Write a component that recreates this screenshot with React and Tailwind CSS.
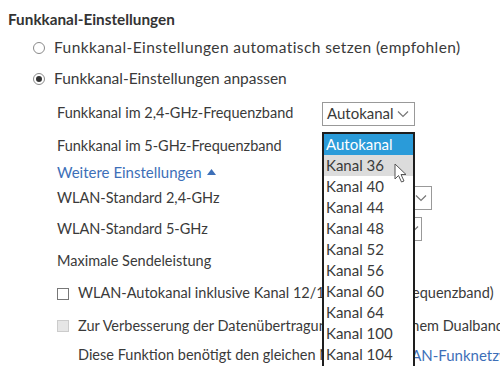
import React from 'react';

const channels = ['Kanal 36', 'Kanal 40', 'Kanal 44', 'Kanal 48', 'Kanal 52', 'Kanal 56', 'Kanal 60', 'Kanal 64', 'Kanal 100', 'Kanal 104', 'Kanal 108'];

function Chevron() {
  return (
    <svg width="12" height="8" viewBox="0 0 12 8" className="shrink-0">
      <path d="M1 1.5 L6 6.5 L11 1.5" fill="none" stroke="#777" strokeWidth="1.2" />
    </svg>
  );
}

function Radio({ checked }) {
  return (
    <span className="w-[12px] h-[12px] rounded-full border border-[#8a8a8a] bg-white flex items-center justify-center shrink-0">
      {checked && <span className="w-[6px] h-[6px] rounded-full bg-[#333]" />}
    </span>
  );
}

function Cursor() {
  return (
    <svg width="14" height="21" viewBox="0 0 14 21" className="absolute left-[394px] top-[163px]">
      <path d="M1 1 L1 16 L4.5 12.5 L7.5 19 L10 18 L7 11.5 L12 11.5 Z" fill="#fff" stroke="#555" strokeWidth="1" strokeLinejoin="round" />
    </svg>
  );
}

function Row({ label, children, h }) {
  return (
    <div className={`flex items-center pl-[57px] ${h}`}>
      <span className="w-[265px] shrink-0">{label}</span>
      {children}
    </div>
  );
}

export default function App() {
  return (
    <div className="relative w-[500px] h-[366px] overflow-hidden bg-white text-[14.5px] text-[#3a3a3a] font-['Lato','Noto_Sans',sans-serif] leading-none">
      <div className="flex flex-col pt-[11px]">
        <h2 className="pl-[8px] h-[18px] flex items-center font-bold text-[15.3px] text-[#333]">Funkkanal-Einstellungen</h2>
        <div className="flex items-center gap-[9px] pl-[33px] h-[31px] mt-[3px] text-[15.5px]">
          <Radio />
          <span className="tracking-[0.4px]">Funkkanal-Einstellungen automatisch setzen (empfohlen)</span>
        </div>
        <div className="flex items-center gap-[9px] pl-[33px] h-[32px] text-[15.5px]">
          <Radio checked />
          <span>Funkkanal-Einstellungen anpassen</span>
        </div>
        <Row label="Funkkanal im 2,4-GHz-Frequenzband" h="h-[35px] mt-[1px]">
          <div className="w-[93px] h-[24px] border border-[#999] flex items-center justify-between pl-[4px] pr-[5px] text-[15px]">
            <span>Autokanal</span>
            <Chevron />
          </div>
        </Row>
        <Row label="Funkkanal im 5-GHz-Frequenzband" h="h-[30px]" />
        <div className="pl-[57px] h-[22px] flex items-center gap-[5px] text-[#3d6fb8] text-[15px]">
          <span>Weitere Einstellungen</span>
          <svg width="9" height="6" viewBox="0 0 9 6"><path d="M0 6 L4.5 0 L9 6 Z" fill="#3d6fb8" /></svg>
        </div>
        <Row label="WLAN-Standard 2,4-GHz" h="h-[30px]">
          <div className="w-[110px] h-[24px] border border-[#999] flex items-center justify-end pr-[4px]">
            <Chevron />
          </div>
        </Row>
        <Row label="WLAN-Standard 5-GHz" h="h-[32px]">
          <div className="w-[100px] h-[24px] border border-[#999] flex items-center justify-end pr-[2px]">
            <Chevron />
          </div>
        </Row>
        <div className="pl-[57px] h-[32px] flex items-center">Maximale Sendeleistung</div>
        <div className="pl-[57px] h-[33px] flex items-center gap-[9px] whitespace-nowrap">
          <span className="w-[12px] h-[12px] border border-[#777] bg-white shrink-0" />
          <span>WLAN-Autokanal inklusive Kanal 12/13 (2,4-GHz-Frequenzband)</span>
        </div>
        <div className="pl-[57px] h-[32px] flex items-center gap-[9px] whitespace-nowrap">
          <span className="w-[12px] h-[12px] border border-[#ccc] bg-[#e6e6e6] shrink-0" />
          <span>Zur Verbesserung der Datenübertragung zwischen einem Dualband-Repeater</span>
        </div>
        <div className="pl-[78px] h-[26px] flex items-center whitespace-nowrap">
          <span>Diese Funktion benötigt den gleichen Namen im&nbsp;</span>
          <span className="text-[#3d6fb8] text-[15px]">WLAN-Funknetzwerk</span>
        </div>
      </div>

      <div className="absolute left-[322px] top-[132px] w-[93px] h-[260px] bg-white border-2 border-[#1e1e1e] flex flex-col text-[15px]">
        <div className="h-[21px] shrink-0 flex items-center pl-[2px] bg-[#2a9bd9] text-white">Autokanal</div>
        {channels.map((c, i) => (
          <div key={c} className={`h-[21px] shrink-0 flex items-center pl-[2px] ${i === 0 ? 'bg-[#dcdcdc]' : ''}`}>{c}</div>
        ))}
      </div>
      <Cursor />
    </div>
  );
}
